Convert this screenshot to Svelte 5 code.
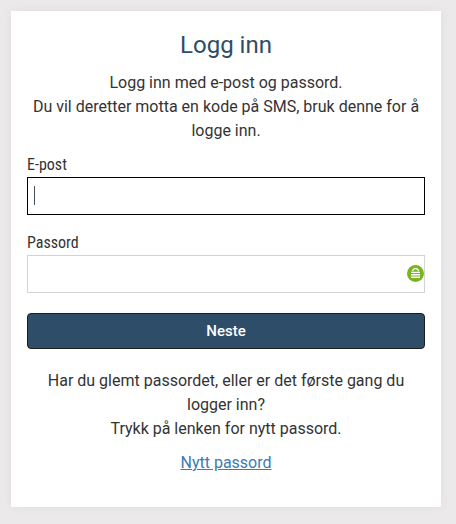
<script lang="ts">
  let email = $state('');
  let password = $state('');

  function submit(e: SubmitEvent) {
    e.preventDefault();
  }
</script>

<main class="page">
  <section class="card">
    <h1>Logg inn</h1>
    <p class="intro">
      Logg inn med e-post og passord.<br />
      Du vil deretter motta en kode på SMS, bruk denne for å logge inn.
    </p>
    <form onsubmit={submit}>
      <div class="field">
        <label for="email">E-post</label>
        <div class="control">
          <input id="email" class="active" type="text" bind:value={email} />
          {#if !email}
            <span class="caret"></span>
          {/if}
        </div>
      </div>
      <div class="field">
        <label for="password">Passord</label>
        <div class="control">
          <input id="password" type="password" bind:value={password} />
          <svg class="lock" viewBox="0 0 17 17" aria-hidden="true">
            <circle cx="8.5" cy="8.5" r="8.5" fill="#7ab51d" />
            <path d="M5.7 6.3V5.8a2.8 2.2 0 0 1 5.6 0V6.3" fill="none" stroke="#fff" stroke-width="1.2" />
            <path d="M4 7.4h9M4 9.8h9M4 12.3h9" stroke="#fff" stroke-width="1.4" />
          </svg>
        </div>
      </div>
      <button type="submit">Neste</button>
    </form>
    <p class="help">
      Har du glemt passordet, eller er det første gang du logger inn?<br />
      Trykk på lenken for nytt passord.
    </p>
    <a href="#nytt-passord">Nytt passord</a>
  </section>
</main>

<style>
  :global(body) {
    margin: 0;
    background: #ebe9ea;
  }
  .page {
    box-sizing: border-box;
    height: 524px;
    padding: 11px 15px 17px 11px;
    font-family: Roboto, sans-serif;
    font-size: 16px;
    line-height: 24px;
    color: #333;
  }
  .card {
    box-sizing: border-box;
    height: 496px;
    padding: 16px;
    background: #fff;
    box-shadow: 0 0 10px rgba(0, 0, 0, 0.05);
    text-align: center;
  }
  h1 {
    margin: 1px 0 9px;
    font-size: 24px;
    font-weight: 400;
    line-height: 34px;
    color: #2d4d68;
  }
  p {
    margin: 0;
  }
  .intro {
    margin: 0 0 10px;
  }
  .field {
    margin-bottom: 16px;
    text-align: left;
  }
  .field:last-of-type {
    margin-bottom: 20px;
  }
  label {
    display: block;
    height: 24px;
    font-family: 'Roboto Condensed', Roboto, sans-serif;
    font-stretch: 75%;
  }
  .control {
    position: relative;
    height: 38px;
  }
  input {
    box-sizing: border-box;
    display: block;
    width: 100%;
    height: 38px;
    padding: 6px;
    border: 1px solid #ced4da;
    border-radius: 0;
    outline: none;
    font: inherit;
    color: #495057;
  }
  input.active {
    border-color: #000;
  }
  .caret {
    position: absolute;
    top: 9px;
    left: 7px;
    width: 1px;
    height: 19px;
    background: #495057;
    pointer-events: none;
  }
  .lock {
    position: absolute;
    top: 10px;
    right: 1px;
    width: 17px;
    height: 17px;
  }
  button {
    display: block;
    width: 100%;
    height: 36px;
    padding: 0;
    border: 1px solid #1c1c1c;
    border-radius: 4px;
    background: #2d4d68;
    font-family: inherit;
    font-size: 15px;
    font-weight: 500;
    color: #fff;
    cursor: pointer;
  }
  .help {
    margin: 20px 0 10px;
  }
  a {
    color: #3d7ab0;
    text-decoration: underline;
  }
</style>
